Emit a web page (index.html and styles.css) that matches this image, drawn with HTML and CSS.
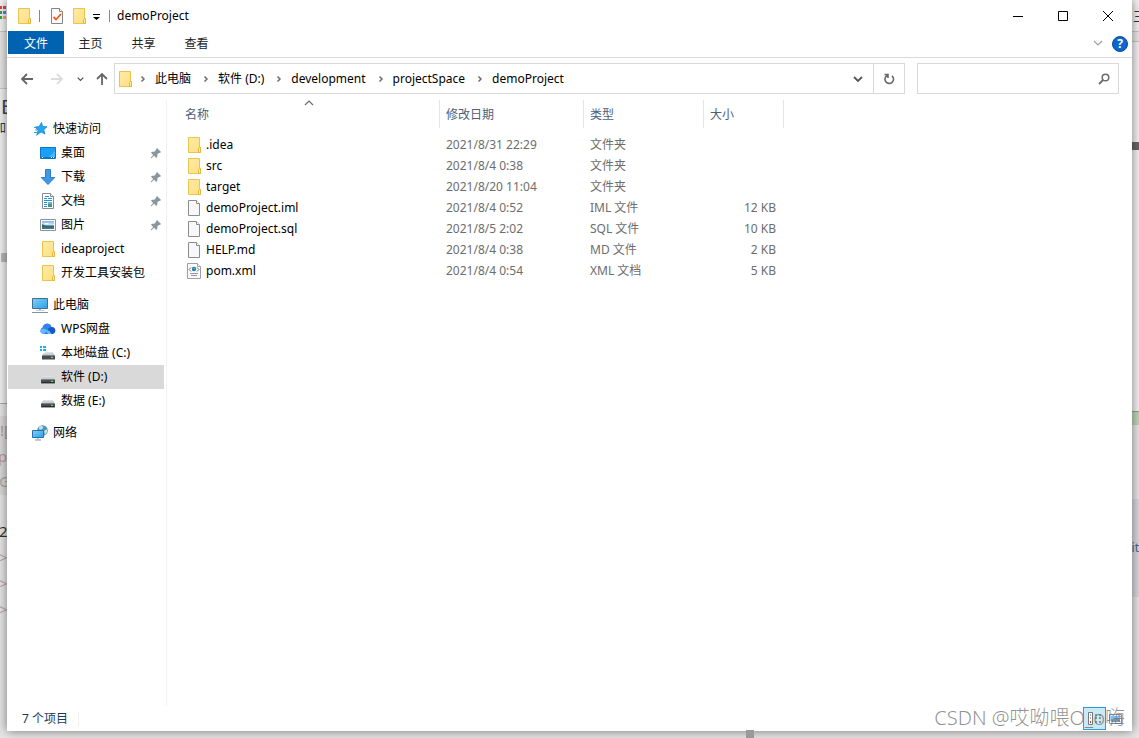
FILE: index.html
```html
<!DOCTYPE html>
<html lang="zh-CN">
<head>
<meta charset="utf-8">
<title>demoProject</title>
<link rel="stylesheet" href="styles.css">
</head>
<body>
<svg class="defs" aria-hidden="true">
  <defs>
    <linearGradient id="gFolder" x1="0" y1="0" x2="1" y2="1"><stop offset="0" stop-color="#ffeaa6"/><stop offset="1" stop-color="#ffdf80"/></linearGradient>
    <linearGradient id="gScreen" x1="0" y1="0" x2="1" y2="1"><stop offset="0" stop-color="#7fd0fb"/><stop offset="1" stop-color="#2b9fe6"/></linearGradient>
    <linearGradient id="gDrive" x1="0" y1="0" x2="0" y2="1"><stop offset="0" stop-color="#e4e6e8"/><stop offset="1" stop-color="#b4b8bb"/></linearGradient>
    <linearGradient id="gPhoto" x1="0" y1="0" x2="0" y2="1"><stop offset="0" stop-color="#7db4ec"/><stop offset=".5" stop-color="#d8ebf5"/><stop offset=".6" stop-color="#3f7268"/><stop offset="1" stop-color="#3a76b0"/></linearGradient>
    <symbol id="folder" viewBox="0 0 16 16"><path d="M2.500.5h11v10h1v5h-12z" fill="url(#gFolder)" stroke="#eac44c"/><path d="M12.500 15.500v-4l1-1h1v5z" fill="#ffe9a0" stroke="#e5b93a"/></symbol>
    <symbol id="file" viewBox="0 0 16 16"><path d="M2.500.5h8l3 3v12h-11z" fill="#f7f8f9" stroke="#8c8c8c"/><path d="M10.500.5v3h3" fill="#fff" stroke="#8c8c8c"/></symbol>
    <symbol id="xml" viewBox="0 0 16 16"><path d="M1.500.5h10l3 3v12h-13z" fill="#fafafa" stroke="#a0a0a4"/><path d="M11.500.5v3h3" fill="#fff" stroke="#a0a0a4"/><path d="M5 4.500 3 6.500l2 2M11 4.500l2 2-2 2" fill="none" stroke="#6a7383"/><circle cx="8" cy="6" r="2.200" fill="#1e7fb5"/><path d="M7 5h2v1H7z" fill="#59bd80"/><path d="M4 10.500h8M5 12.500h6" stroke="#9096b0"/></symbol>
    <symbol id="check" viewBox="0 0 16 16"><path d="M2.500.5h8l3 3v12h-11z" fill="#fafafa" stroke="#858585"/><path d="M10.500.5v3h3" fill="#fff" stroke="#858585"/><path d="M4.500 9 7 11.500l5-5.500" fill="none" stroke="#ef5a22" stroke-width="1.800"/></symbol>
    <symbol id="star" viewBox="0 0 16 16"><path d="m9.500 1.500 1.200 4 4.300.2-3.200 3 1 4.300L9 10.900 5 14l1-4.800L3.200 6l3.900-.4z" fill="#27a6f0" stroke="#1785d3" stroke-width=".8"/><path d="M2 6.500h2M3 9h2M2 11.500h3M4 14h1" stroke="#3a9de0"/></symbol>
    <symbol id="desktop" viewBox="0 0 16 16"><path d="M.5 2.500h15v11H.5z" fill="#18a0fb" stroke="#1274bf"/><path d="M9 12 15 6v6z" fill="#48b7ff"/><path d="M1 12.500h14" stroke="#0879cb"/><path d="M2 12.500h1M11 12.500h1M13 12.500h1" stroke="#fff"/></symbol>
    <symbol id="download" viewBox="0 0 16 16"><path d="M5.500.5h5v8h4.300L8 15.500 1.200 8.500h4.300z" fill="#3d98e6" stroke="#2c7fcb"/></symbol>
    <symbol id="doc" viewBox="0 0 16 16"><path d="M2.500.5h8l3 3v12h-11z" fill="#fff" stroke="#858b90"/><path d="M10.500.5v3h3" fill="#eee" stroke="#858b90"/><path d="M5 3.500h4M4 5.500h3M8 5.500h4M4 7.500h8M4 9.500h3M4 11.500h3M4 13.500h3" stroke="#2a91d1"/><path d="M8 9h4v2H8z" fill="#66b6e3"/><path d="M8 11h4v3H8z" fill="#55916c"/></symbol>
    <symbol id="photo" viewBox="0 0 16 16"><path d="M.5 2.500h15v11H.5z" fill="#fff" stroke="#8e9498"/><path d="M2 4h12v8H2z" fill="url(#gPhoto)"/><path d="m2 7 4 2h8v1H2z" fill="#31665a"/><path d="M4 6h4l1 1H5z" fill="#fff"/></symbol>
    <symbol id="pc" viewBox="0 0 16 16"><path d="M.5 1.500h15v10H.5z" fill="url(#gScreen)" stroke="#416f8e"/><path d="M7 12h2v1.500H7z" fill="#9eb6c6"/><path d="M0 15.500h16" stroke="#8095a3"/><path d="M4 13.500h8" stroke="#c3d0d8"/></symbol>
    <symbol id="cloud" viewBox="0 0 16 16"><path d="M3.500 13a3.500 3.500 0 0 1-.8-6.700A4.700 4.700 0 0 1 11.500 5L8 13z" fill="#2f84f2"/><path d="M8 8a4.500 4.500 0 0 1 4.500-2A3.600 3.600 0 0 1 12.700 13H11z" fill="#1658c4"/><path d="M0 9.500c4-4 7-1 12 3.500H8.500L6 10.500 4 13c-2 0-4-1-4-3.500z" fill="#65b9ff"/></symbol>
    <symbol id="drive" viewBox="0 0 16 16"><path d="M3 7h10l2 4H1z" fill="url(#gDrive)"/><path d="M1 10.500h14v4H1z" fill="#4a4c4e"/><path d="M2 13.500h12" stroke="#2a2b2c"/><path d="M11 11.800h2v1.200h-2z" fill="#59e35c"/></symbol>
    <symbol id="sysdrive" viewBox="0 0 16 16"><path d="M6 7h7l2 4H2l1-2z" fill="url(#gDrive)"/><path d="M2 10.500h13v4H2z" fill="#4a4c4e"/><path d="M11 11.800h2v1.200h-2z" fill="#59e35c"/><path d="M0 1h2v2H0zM3 1h3v2H3zM0 4h2v2H0zM3 4h3v2H3z" fill="#18b4ec"/></symbol>
    <symbol id="network" viewBox="0 0 16 16"><circle cx="10.500" cy="5.500" r="5.300" fill="#4f93bb"/><path d="M7 2c2-2 5-1 4 1S8 5 7 4zM12 6l3-2v3l-2 3z" fill="#c1e3e5"/><path d="M.5 5.500h11v7H.5z" fill="url(#gScreen)" stroke="#2472ad"/><path d="M6 13v1.500M3 15h6" stroke="#8298ad"/></symbol>
    <symbol id="pin" viewBox="0 0 12 12"><path d="m7 1 4 4-1.200 1-.6-.2-2 2 .1 2.300-1 .9-2.200-2.200L1 11.500.5 11l2.700-3.100L1 5.700l.9-1 2.300.1 2-2L6 2.200z" fill="#8996a0"/></symbol>
    <symbol id="crumb" viewBox="0 0 6 8"><path d="m1.500 1.500 2.500 2.500-2.500 2.500" fill="none" stroke="#6e6e6e" stroke-width="1.500"/></symbol>
    <symbol id="down" viewBox="0 0 10 8"><path d="m1 2 4 4 4-4" fill="none" stroke="currentColor" stroke-width="1.800"/></symbol>
  </defs>
</svg>

<div class="backdrop" aria-hidden="true">
  <i class="shade top"></i><i class="shade pane"></i><i class="shade quote"></i><i class="shade scroll"></i>
  <svg class="apps" viewBox="0 0 6 14"><path d="M0 1h2v3H0zM3 1h3v3H3z" fill="#e5453b"/><path d="M0 6h2v3H0z" fill="#3f9c55"/><path d="M3 6h3v3H3z" fill="#4a88e8"/><path d="M0 11h2v3H0z" fill="#3f9c55"/><path d="M3 11h3v3H3z" fill="#efb52e"/></svg>
  <span class="bit e">E</span><span class="bit jia">加</span>
  <span class="bit bang">![</span><span class="bit p">p</span><span class="bit g">G</span><span class="bit two">2</span>
  <span class="bit gt1">&gt;</span><span class="bit gt2">&gt;</span><span class="bit gt3">&gt;</span>
  <i class="shade rtop"></i><i class="shade rbar"></i><i class="shade rdark"></i><i class="shade green"></i><i class="shade rgray"></i><i class="shade splitter"></i>
  <span class="bit san">主</span><span class="bit it">it</span>
</div>

<div class="window">
  <header class="titlebar">
    <svg class="icon"><use href="#folder"/></svg>
    <i class="rule"></i>
    <button class="quick" aria-label="属性"><svg class="icon"><use href="#check"/></svg></button>
    <button class="quick" aria-label="新建文件夹"><svg class="icon"><use href="#folder"/></svg></button>
    <button class="quick more" aria-label="自定义快速访问工具栏"><svg width="7" height="6" viewBox="0 0 7 6"><path d="M0 0h7v1H0zM0 3h7L3.500 6z"/></svg></button>
    <i class="rule"></i>
    <h1 class="title">demoProject</h1>
    <div class="controls">
      <button aria-label="最小化"><svg width="12" height="12" viewBox="0 0 12 12"><path d="M1 6.500h10"/></svg></button>
      <button aria-label="最大化"><svg width="12" height="12" viewBox="0 0 12 12"><path d="M1.500 1.500h9v9h-9z"/></svg></button>
      <button aria-label="关闭"><svg width="12" height="12" viewBox="0 0 12 12"><path d="m1 1 10 10M11 1 1 11"/></svg></button>
    </div>
  </header>

  <nav class="ribbon">
    <button class="tab file">文件</button>
    <button class="tab">主页</button>
    <button class="tab">共享</button>
    <button class="tab">查看</button>
    <button class="expand" aria-label="展开功能区"><svg width="10" height="8" viewBox="0 0 10 8"><path d="m1 2 4 4 4-4" fill="none" stroke="#a0a0a0" stroke-width="1.200"/></svg></button>
    <button class="help" aria-label="帮助">?</button>
  </nav>

  <div class="toolbar">
    <button class="nav" aria-label="后退"><svg width="14" height="12" viewBox="0 0 14 12"><path d="M13 6H2M7 1 2 6l5 5"/></svg></button>
    <button class="nav off" aria-label="前进"><svg width="14" height="12" viewBox="0 0 14 12"><path d="M1 6h11M7 1l5 5-5 5"/></svg></button>
    <button class="nav recent" aria-label="最近位置"><svg width="7" height="6" viewBox="0 0 10 8"><use href="#down"/></svg></button>
    <button class="nav up" aria-label="上移"><svg width="12" height="14" viewBox="0 0 12 14"><path d="M6 13V2M1 7l5-5 5 5"/></svg></button>
    <div class="address">
      <svg class="icon"><use href="#folder"/></svg>
      <svg class="crumb"><use href="#crumb"/></svg><a href="#pc">此电脑</a>
      <svg class="crumb"><use href="#crumb"/></svg><a href="#d">软件 (D:)</a>
      <svg class="crumb"><use href="#crumb"/></svg><a href="#dev">development</a>
      <svg class="crumb"><use href="#crumb"/></svg><a href="#space">projectSpace</a>
      <svg class="crumb"><use href="#crumb"/></svg><a href="#demo">demoProject</a>
      <button class="history" aria-label="以前的位置"><svg width="10" height="8"><use href="#down"/></svg></button>
      <button class="refresh" aria-label="刷新"><svg width="12" height="12" viewBox="0 0 12 12"><path d="M9 2.800A4.300 4.300 0 1 1 4.500 2.200M1.500 1.500H5V5" fill="none" stroke="#6b6b6b" stroke-width="1.600"/></svg></button>
    </div>
    <label class="search"><input type="text" aria-label="搜索"><svg width="12" height="12" viewBox="0 0 12 12"><circle cx="7.500" cy="4.500" r="3.300" fill="none" stroke="#6b6b6b" stroke-width="1.500"/><path d="M5 7 1 11" stroke="#6b6b6b" stroke-width="1.800"/></svg></label>
  </div>

  <div class="content">
    <nav class="tree">
      <a class="root quickroot" href="#q"><svg class="icon"><use href="#star"/></svg>快速访问</a>
      <a href="#1"><svg class="icon"><use href="#desktop"/></svg>桌面<svg class="pin"><use href="#pin"/></svg></a>
      <a href="#2"><svg class="icon"><use href="#download"/></svg>下载<svg class="pin"><use href="#pin"/></svg></a>
      <a href="#3"><svg class="icon"><use href="#doc"/></svg>文档<svg class="pin"><use href="#pin"/></svg></a>
      <a href="#4"><svg class="icon"><use href="#photo"/></svg>图片<svg class="pin"><use href="#pin"/></svg></a>
      <a href="#5"><svg class="icon"><use href="#folder"/></svg>ideaproject</a>
      <a href="#6"><svg class="icon"><use href="#folder"/></svg>开发工具安装包</a>
      <a class="root" href="#pc"><svg class="icon"><use href="#pc"/></svg>此电脑</a>
      <a href="#7"><svg class="icon"><use href="#cloud"/></svg>WPS网盘</a>
      <a href="#8"><svg class="icon"><use href="#sysdrive"/></svg>本地磁盘 (C:)</a>
      <a class="selected" href="#d"><svg class="icon"><use href="#drive"/></svg>软件 (D:)</a>
      <a href="#9"><svg class="icon"><use href="#drive"/></svg>数据 (E:)</a>
      <a class="root" href="#net"><svg class="icon"><use href="#network"/></svg>网络</a>
    </nav>
    <main class="list">
      <table>
        <colgroup><col class="c-name"><col class="c-date"><col class="c-type"><col class="c-size"></colgroup>
        <thead><tr>
          <th>名称<svg class="sort" width="10" height="6" viewBox="0 0 10 6"><path d="m1 5 4-4 4 4" fill="none" stroke="#6b6b6b" stroke-width="1.200"/></svg></th>
          <th>修改日期</th><th>类型</th><th>大小</th>
        </tr></thead>
        <tbody>
          <tr><td><div class="name"><svg class="icon"><use href="#folder"/></svg>.idea</div></td><td>2021/8/31 22:29</td><td>文件夹</td><td></td></tr>
          <tr><td><div class="name"><svg class="icon"><use href="#folder"/></svg>src</div></td><td>2021/8/4 0:38</td><td>文件夹</td><td></td></tr>
          <tr><td><div class="name"><svg class="icon"><use href="#folder"/></svg>target</div></td><td>2021/8/20 11:04</td><td>文件夹</td><td></td></tr>
          <tr><td><div class="name"><svg class="icon"><use href="#file"/></svg>demoProject.iml</div></td><td>2021/8/4 0:52</td><td>IML 文件</td><td>12 KB</td></tr>
          <tr><td><div class="name"><svg class="icon"><use href="#file"/></svg>demoProject.sql</div></td><td>2021/8/5 2:02</td><td>SQL 文件</td><td>10 KB</td></tr>
          <tr><td><div class="name"><svg class="icon"><use href="#file"/></svg>HELP.md</div></td><td>2021/8/4 0:38</td><td>MD 文件</td><td>2 KB</td></tr>
          <tr><td><div class="name"><svg class="icon"><use href="#xml"/></svg>pom.xml</div></td><td>2021/8/4 0:54</td><td>XML 文档</td><td>5 KB</td></tr>
        </tbody>
      </table>
    </main>
  </div>

  <footer class="status">
    <span class="count">7 个项目</span>
    <div class="views">
      <button class="details" aria-label="详细信息"><svg width="16" height="16" viewBox="0 0 16 16"><path d="M1.500 1.500h4v12h-4z" fill="#fff" stroke="#777"/><path d="M3 4h1M3 7h1" stroke="#47708f"/><path d="M3 11h1" stroke="#c33" stroke-width="2"/><path d="M8 4h2M12 4h2M8 7h2M12 7h2M8 11h2M12 11h2" stroke="#345"/></svg></button>
      <button class="large" aria-label="大缩略图"><svg width="14" height="12" viewBox="0 0 14 12"><path d="M.5 1.500h12v9H.5z" fill="#fff" stroke="#6f95b8"/><path d="M2 3h9v3H2z" fill="#7dbdf6"/><path d="M2 6h9v3H2z" fill="#7d9bb0"/></svg></button>
    </div>
    <span class="watermark">CSDN @哎呦喂O_o嗨</span>
  </footer>
</div>
</body>
</html>
```
FILE: styles.css
```css
* { box-sizing: border-box; }
html, body { height: 100%; }
body {
  margin: 0;
  padding: 0 7px 7px;
  overflow: hidden;
  background: #e6e6e6;
  color: #000;
  font: 12px/20px "Noto Sans", "Noto Sans CJK SC", sans-serif;
}
button { padding: 0; border: 0; background: none; color: inherit; font: inherit; display: flex; align-items: center; justify-content: center; }
a { color: inherit; text-decoration: none; }
svg { flex: none; }
.defs { position: absolute; width: 0; height: 0; }
.icon { width: 16px; height: 16px; }

/* desktop behind the window */
.backdrop { position: absolute; inset: 0; overflow: hidden; }
.shade { position: absolute; }
.top { left: 0; top: 0; width: 8px; height: 32px; background: #f3f3f3; border-bottom: 1px solid #c8c8c8; }
.pane { left: 0; top: 88px; width: 8px; height: 316px; background: #f0f0f0; border-top: 1px solid #c8c8c8; border-bottom: 1px solid #aaa; }
.quote { left: 0; top: 416px; width: 8px; height: 79px; background: #dadada; }
.scroll { left: 1px; top: 253px; width: 8px; height: 9px; background: #b8b8b8; }
.rtop { right: 0; top: 0; width: 8px; height: 412px; background: #f2f2f2; border-bottom: 1px solid #9a9a9a; }
.rbar { right: 0; top: 31px; width: 8px; height: 11px; background: #e8e8e8; border: 1px solid #c8c8c8; border-width: 1px 0; }
.rdark { right: 0; top: 142px; width: 8px; height: 8px; background: #666; }
.green { right: 0; top: 412px; width: 8px; height: 13px; background: #bcd6ba; }
.rgray { right: 0; top: 499px; width: 8px; height: 98px; background: #d7d8de; }
.splitter { left: 746px; bottom: 0; width: 8px; height: 8px; background: #999; z-index: 1; }
.apps { position: absolute; left: 0; top: 5px; width: 6px; height: 14px; }
.bit { position: absolute; font-size: 15px; line-height: 20px; white-space: nowrap; }
.e { left: 1px; top: 97px; font-size: 20px; color: #445; }
.jia { left: -6px; top: 118px; font-size: 12px; color: #333; }
.bang { left: 0; top: 420px; color: #b59a8a; }
.p { left: -2px; top: 446px; color: #c09a9a; }
.g { left: -1px; top: 471px; color: #aaa; }
.two { left: -1px; top: 521px; color: #333; }
.gt1 { left: -1px; top: 547px; color: #b8a8a8; }
.gt2 { left: -1px; top: 573px; color: #b8a8a8; }
.gt3 { left: -1px; top: 599px; color: #b8a8a8; }
.san { right: -9px; top: 5px; color: #333; }
.it { right: 0; top: 538px; font-size: 12px; color: #3d6a9a; }

.window {
  position: relative;
  display: flex;
  flex-direction: column;
  height: 100%;
  background: #fff;
  box-shadow: 0 0 10px rgba(0, 0, 0, .5);
}

.titlebar { display: flex; align-items: center; height: 31px; padding: 0 2px 0 9px; }
.titlebar .rule { width: 1px; height: 12px; margin: 0 9px 0 7px; background: #888; }
.quick { margin-right: 6px; }
.more { width: 11px; margin: 2px 0 0 -2px; }
.title { margin: 0 0 0 -2px; font-size: 12px; font-weight: 400; }
.controls { display: flex; margin-left: auto; align-self: stretch; }
.controls button { width: 45px; }
.controls path { fill: none; stroke: #000; stroke-width: 1; }

.ribbon { display: flex; align-items: center; height: 27px; padding: 0 4px 4px 1px; border-bottom: 1px solid #d9d9d9; color: #222; }
.tab { width: 53px; height: 23px; padding-top: 3px; }
.file { width: 56px; background: #0063b1; color: #fff; }
.expand { margin-left: auto; width: 20px; padding-top: 2px; }
.help { width: 16px; height: 16px; margin: 3px 0 0 4px; border: 1px solid #0b4a8f; border-radius: 50%; background: #0a68cf; color: #fff; font-weight: 700; line-height: 14px; }

.toolbar { display: flex; align-items: center; padding: 5px 13px 0 9px; }
.nav { width: 30px; color: #555; }
.nav:first-child { width: 22px; margin-right: 4px; }
.nav path { fill: none; stroke: #666; stroke-width: 1.800; }
.nav.off path { stroke: #ddd; }
.recent { width: 17px; }
.up { width: 25px; }
.address { display: flex; flex: 1; align-items: center; height: 31px; border: 1px solid #d9d9d9; padding-left: 2px; }
.crumb { width: 6px; height: 8px; margin: 0 9px 0 7px; }
.address a { margin-right: 5px; white-space: nowrap; }
.history { width: 30px; height: 100%; margin-left: auto; color: #555; }
.refresh { width: 31px; height: 100%; border-left: 1px solid #d9d9d9; }
.search { display: flex; align-items: center; width: 202px; height: 31px; margin-left: 12px; padding-right: 8px; border: 1px solid #d9d9d9; }
.search input { flex: 1; min-width: 0; height: 100%; border: 0; outline: 0; font: inherit; padding: 0 8px; }

.content { display: flex; flex: 1; min-height: 0; padding-top: 6px; }
.tree { width: 160px; padding: 17px 2px 0 1px; border-right: 1px solid #f2f2f2; }
.tree a { display: flex; align-items: center; gap: 5px; height: 24px; padding: 0 2px 0 32px; white-space: nowrap; }
.tree .root { margin-top: 8px; padding-left: 24px; }
.tree .quickroot { margin-top: 0; }
.tree .selected { background: #d9d9d9; }
.pin { width: 12px; height: 12px; margin-left: auto; }

.list { flex: 1; }
table { width: 617px; table-layout: fixed; border-collapse: separate; border-spacing: 0; color: #6d6d6d; }
.c-name { width: 273px; }
.c-date { width: 144px; }
.c-type { width: 120px; }
.c-size { width: 80px; }
th { position: relative; height: 28px; padding: 2px 6px 0; border-right: 1px solid #e5e5e5; color: #4c607a; font-weight: 400; text-align: left; }
th:first-child { padding-left: 18px; }
.sort { position: absolute; left: 137px; top: 0; }
tbody::before { content: ""; display: block; height: 6px; }
td { height: 21px; padding: 0 8px 0 6px; white-space: nowrap; }
td:first-child { padding-left: 19px; color: #000; }
td:last-child { text-align: right; }
.name { display: flex; align-items: center; gap: 4px; }

.status { position: relative; display: flex; align-items: center; height: 25px; padding-left: 15px; color: #1e395b; }
.count { padding-right: 10px; border-right: 1px solid #f0f0f0; line-height: 14px; }
.views { display: flex; align-items: center; margin-left: auto; padding-right: 6px; }
.details { width: 23px; height: 23px; border: 1px solid #26a0da; background: #cbe8f6; }
.large { width: 20px; height: 23px; }
.watermark { position: absolute; right: 7px; bottom: 2px; color: rgba(110, 110, 110, .75); font-size: 20px; line-height: 22px; font-weight: 300; pointer-events: none; }
```
